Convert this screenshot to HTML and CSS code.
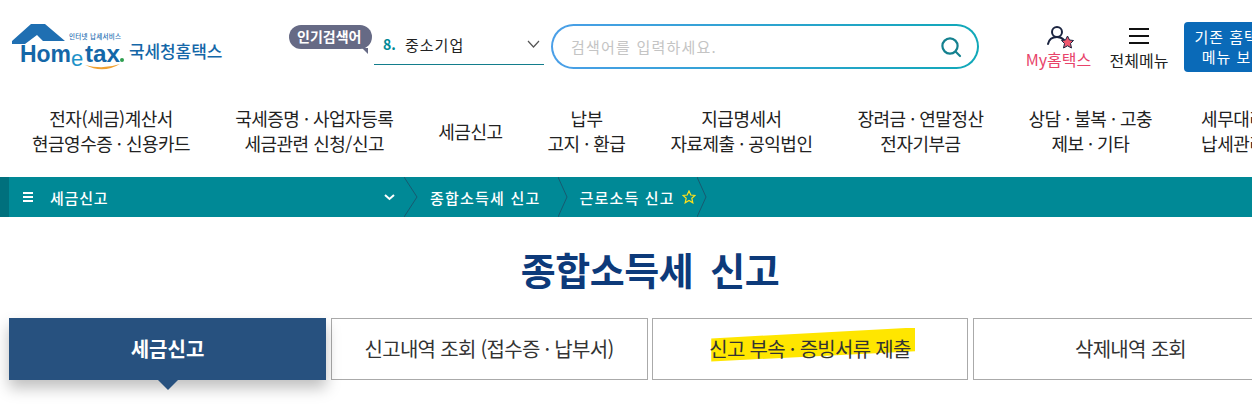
FILE: index.html
```html
<!DOCTYPE html>
<html lang="ko">
<head>
    <meta charset="UTF-8">
    <meta name="viewport" content="width=device-width, initial-scale=1.0">
    <title>종합소득세 신고 - 국세청홈택스</title>
    <link rel="stylesheet" href="styles.css">
</head>
<body>
<div class="page">
    <header class="top">
        <a class="logo">
            <svg width="212" height="54" viewBox="0 0 212 54">
                <path d="M1 21 L20 4 H34 L54 21 H32 L26 15 L14 24 H1 Z" fill="#1f6fb2"/>
                <text class="logo-small" x="58" y="19" textLength="52">인터넷 납세서비스</text>
                <text class="logo-home" x="9" y="42" textLength="51" lengthAdjust="spacingAndGlyphs">Hom</text>
                <text class="logo-e" x="60" y="46">e</text>
                <text class="logo-home" x="74" y="42" textLength="35" lengthAdjust="spacingAndGlyphs">tax</text>
                <circle cx="111" cy="40" r="2" fill="#2e9e4f"/>
                <path d="M74 45 Q92 54 109 44 Q92 50 74 45 Z" fill="#f0a030"/>
                <text class="logo-name" x="118" y="38">국세청홈택스</text>
            </svg>
        </a>
        <div class="hot">
            <span class="hot-badge">인기검색어</span>
            <div class="hot-select">
                <b>8.</b><span>중소기업</span>
                <svg width="13" height="8" viewBox="0 0 13 8" fill="none" stroke="#555" stroke-width="1.2"><path d="M1 1 L6.500 7 L12 1"/></svg>
            </div>
        </div>
        <div class="search">
            <input type="text" placeholder="검색어를 입력하세요.">
            <svg width="22" height="22" viewBox="0 0 22 22" fill="none" stroke="#14818f" stroke-width="2.2" stroke-linecap="round"><circle cx="10" cy="10" r="7.6"/><line x1="16" y1="16" x2="20" y2="20"/></svg>
        </div>
        <div class="util my">
            <svg width="30" height="24" viewBox="0 0 30 24">
                <circle cx="13" cy="6" r="5" fill="none" stroke="#1b2440" stroke-width="2"/>
                <path d="M4 18 C5 13 9 11 13 11 C16 11 18 12 20 14" fill="none" stroke="#1b2440" stroke-width="2" stroke-linecap="round"/>
                <path d="M23.500 10 L25.500 14 L29.500 14.500 L26.500 17.500 L27.500 22 L23.500 19.800 L19.500 22 L20.500 17.500 L17.500 14.500 L21.500 14 Z" fill="#f0596f" stroke="#1b2440" stroke-width="1"/>
            </svg>
            <span>My홈택스</span>
        </div>
        <div class="util all">
            <svg width="20" height="16" viewBox="0 0 20 16" fill="#111"><rect width="20" height="2"/><rect y="7" width="20" height="2"/><rect y="14" width="20" height="2"/></svg>
            <span>전체메뉴</span>
        </div>
        <a class="old-btn">기존 홈택스<br>메뉴 보기</a>
    </header>

    <nav class="gnb">
        <a>전자(세금)계산서<br>현금영수증 · 신용카드</a>
        <a>국세증명 · 사업자등록<br>세금관련 신청/신고</a>
        <a>세금신고</a>
        <a>납부<br>고지 · 환급</a>
        <a>지급명세서<br>자료제출 · 공익법인</a>
        <a>장려금 · 연말정산<br>전자기부금</a>
        <a>상담 · 불복 · 고충<br>제보 · 기타</a>
        <a>세무대리<br>납세관리</a>
    </nav>

    <div class="crumbs">
        <div class="crumb-first">
            <svg width="10" height="10" viewBox="0 0 10 10" fill="#fff"><rect width="10" height="2"/><rect y="4" width="10" height="2"/><rect y="8" width="10" height="2"/></svg>
            <span>세금신고</span>
            <svg class="crumb-down" width="11" height="7" viewBox="0 0 11 7" fill="none" stroke="#fff" stroke-width="2"><path d="M1 1 L5.500 5 L10 1"/></svg>
        </div>
        <svg class="sep" width="14" height="40" viewBox="0 0 14 40" fill="none" stroke="#175a70"><path d="M0 0 L13 20 L0 40"/></svg>
        <span class="crumb-item first">종합소득세 신고</span>
        <svg class="sep" width="10" height="40" viewBox="0 0 10 40" fill="none" stroke="#175a70"><path d="M0 0 L9 20 L0 40"/></svg>
        <span class="crumb-item second">근로소득 신고</span>
        <svg class="star" width="14" height="14" viewBox="0 0 14 14" fill="none" stroke="#ffe11a" stroke-width="1.2"><path d="M7 1 L8.800 5 L13 5.400 L9.800 8.200 L10.800 12.800 L7 10.400 L3.200 12.800 L4.200 8.200 L1 5.400 L5.200 5 Z"/></svg>
        <svg class="sep last" width="10" height="40" viewBox="0 0 10 40" fill="none" stroke="#175a70"><path d="M0 0 L9 20 L0 40"/></svg>
    </div>

    <h1 class="title">종합소득세 신고</h1>

    <div class="tabs">
        <a class="tab active">세금신고</a>
        <a class="tab">신고내역 조회 (접수증 · 납부서)</a>
        <a class="tab"><span class="marked">신고 부속 · 증빙서류 제출</span></a>
        <a class="tab">삭제내역 조회</a>
    </div>
</div>
</body>
</html>
```
FILE: styles.css
```css
* {
    margin: 0;
    padding: 0;
    box-sizing: border-box;
}

html, body {
    overflow: hidden;
    background: #fff;
}

body {
    height: 416px;
    font-family: "Noto Sans CJK KR", "Noto Sans", sans-serif;
    color: #222;
}

.page {
    width: 1298px;
}

/* top bar */
.top {
    display: flex;
    align-items: flex-start;
    height: 95px;
    padding-left: 11px;
}

.logo {
    width: 212px;
    height: 54px;
    margin-top: 20px;
    flex-shrink: 0;
}

.logo-small {
    font-size: 6.500px;
    font-weight: 500;
    fill: #1f6fb2;
}

.logo-home {
    font-family: "Liberation Sans", sans-serif;
    font-size: 24px;
    font-weight: 700;
    fill: #1467a8;
}

.logo-e {
    font-family: "Liberation Sans", sans-serif;
    font-size: 22px;
    fill: #1e93c9;
}

.logo-name {
    font-size: 17px;
    font-weight: 500;
    letter-spacing: -0.1px;
    fill: #1467a8;
}

.hot {
    display: flex;
    margin-left: 66px;
    flex-shrink: 0;
}

.hot-badge {
    position: relative;
    width: 83px;
    height: 24px;
    margin-top: 25px;
    padding-left: 8px;
    border-radius: 12px;
    background: #666a85;
    color: #fff;
    font-size: 14px;
    font-weight: 700;
    line-height: 23px;
    white-space: nowrap;
}

.hot-badge::after {
    content: '';
    position: absolute;
    right: 4px;
    bottom: -5px;
    border-top: 6px solid #666a85;
    border-left: 6px solid transparent;
}

.hot-select {
    display: flex;
    align-items: center;
    width: 170px;
    height: 41px;
    margin: 24px 0 0 2px;
    padding: 0 4px 0 9px;
    border-bottom: 1px solid #137d8c;
    font-size: 14px;
}

.hot-select b {
    width: 22px;
    color: #008996;
}

.hot-select span {
    flex: 1;
    font-size: 15px;
    letter-spacing: 1px;
}

.search {
    display: flex;
    align-items: center;
    justify-content: space-between;
    width: 428px;
    height: 45px;
    margin: 24px 0 0 7px;
    padding: 0 15px 0 18px;
    border: 2px solid transparent;
    border-radius: 23px;
    background: linear-gradient(#fff, #fff) padding-box, linear-gradient(90deg, #4a9fe8, #10a8b8) border-box;
    flex-shrink: 0;
}

.search input {
    width: 340px;
    border: 0;
    outline: none;
    font-family: inherit;
    font-size: 15px;
    letter-spacing: 1.2px;
}

.search input::placeholder {
    color: #c4c4c4;
}

.util {
    display: flex;
    flex-direction: column;
    align-items: center;
    flex-shrink: 0;
    font-size: 16px;
    white-space: nowrap;
}

.my {
    width: 67px;
    margin: 26px 0 0 46px;
    color: #e8436a;
}

.my span {
    margin-top: -3px;
}

.all {
    width: 60px;
    margin: 28px 0 0 17px;
    color: #222;
}

.all span {
    margin-top: 4px;
}

.old-btn {
    width: 100px;
    height: 50px;
    margin: 22px 0 0 15px;
    border-radius: 4px;
    background: #0a6ab8;
    color: #fff;
    font-size: 15px;
    line-height: 20px;
    padding-top: 5px;
    letter-spacing: 1px;
    text-align: center;
    white-space: nowrap;
    flex-shrink: 0;
}

/* main menu */
.gnb {
    display: flex;
    gap: 45px;
    height: 82px;
    padding: 11px 0 0 32px;
    white-space: nowrap;
}

.gnb a {
    display: flex;
    align-items: center;
    height: 50px;
    font-size: 18px;
    line-height: 25px;
    letter-spacing: -0.5px;
    text-align: center;
}

.gnb a:last-child {
    margin-left: 4px;
}

/* breadcrumb */
.crumbs {
    display: flex;
    align-items: center;
    height: 40px;
    background: #008996;
    color: #fff;
    font-size: 15px;
    font-weight: 500;
    letter-spacing: 1.2px;
}

.crumb-first {
    display: flex;
    align-items: center;
    width: 404px;
    height: 40px;
    padding: 0 8px 0 23px;
    border-left: 9px solid #00707d;
    letter-spacing: 0.8px;
}

.crumb-first span {
    flex: 1;
    margin-left: 17px;
}

.crumb-first .crumb-down {
    margin-right: 1px;
}

.crumb-first svg:first-child {
    margin-left: -9px;
}

.sep {
    flex-shrink: 0;
}

.crumb-item.first {
    margin: 0 18px 0 12px;
}

.crumb-item.second {
    margin-left: 11px;
}

.star {
    margin-left: 7px;
}

.sep.last {
    margin-left: 1px;
}

/* page title */
.title {
    height: 101px;
    padding: 22px 0 0 2px;
    color: #0d3a7a;
    font-size: 38px;
    font-weight: 700;
    line-height: 60px;
    letter-spacing: -0.5px;
    text-align: center;
    word-spacing: 7px;
}

/* tabs */
.tabs {
    display: grid;
    grid-template-columns: 317px 317px 316px 316px;
    column-gap: 4.5px;
    padding-left: 9px;
}

.tab {
    display: flex;
    align-items: center;
    justify-content: center;
    height: 62px;
    padding-bottom: 2px;
    border: 1px solid #aaa;
    color: #333;
    font-size: 20px;
    letter-spacing: -0.7px;
}

.tab.active {
    position: relative;
    border: 0;
    background: #27517f;
    color: #fff;
    font-weight: 700;
    letter-spacing: 0;
    box-shadow: 0 8px 14px rgba(0, 0, 0, 0.25);
}

.tab.active::after {
    content: '';
    position: absolute;
    left: 149px;
    bottom: -10px;
    border-top: 10px solid #27517f;
    border-left: 10px solid transparent;
    border-right: 10px solid transparent;
}

.marked {
    position: relative;
    z-index: 0;
}

.marked::before {
    content: '';
    position: absolute;
    z-index: -1;
    left: 2px;
    top: -6px;
    width: 204px;
    height: 34px;
    background: #ffe600;
    clip-path: polygon(0 32%, 100% 0, 100% 70%, 0 100%);
}
```
